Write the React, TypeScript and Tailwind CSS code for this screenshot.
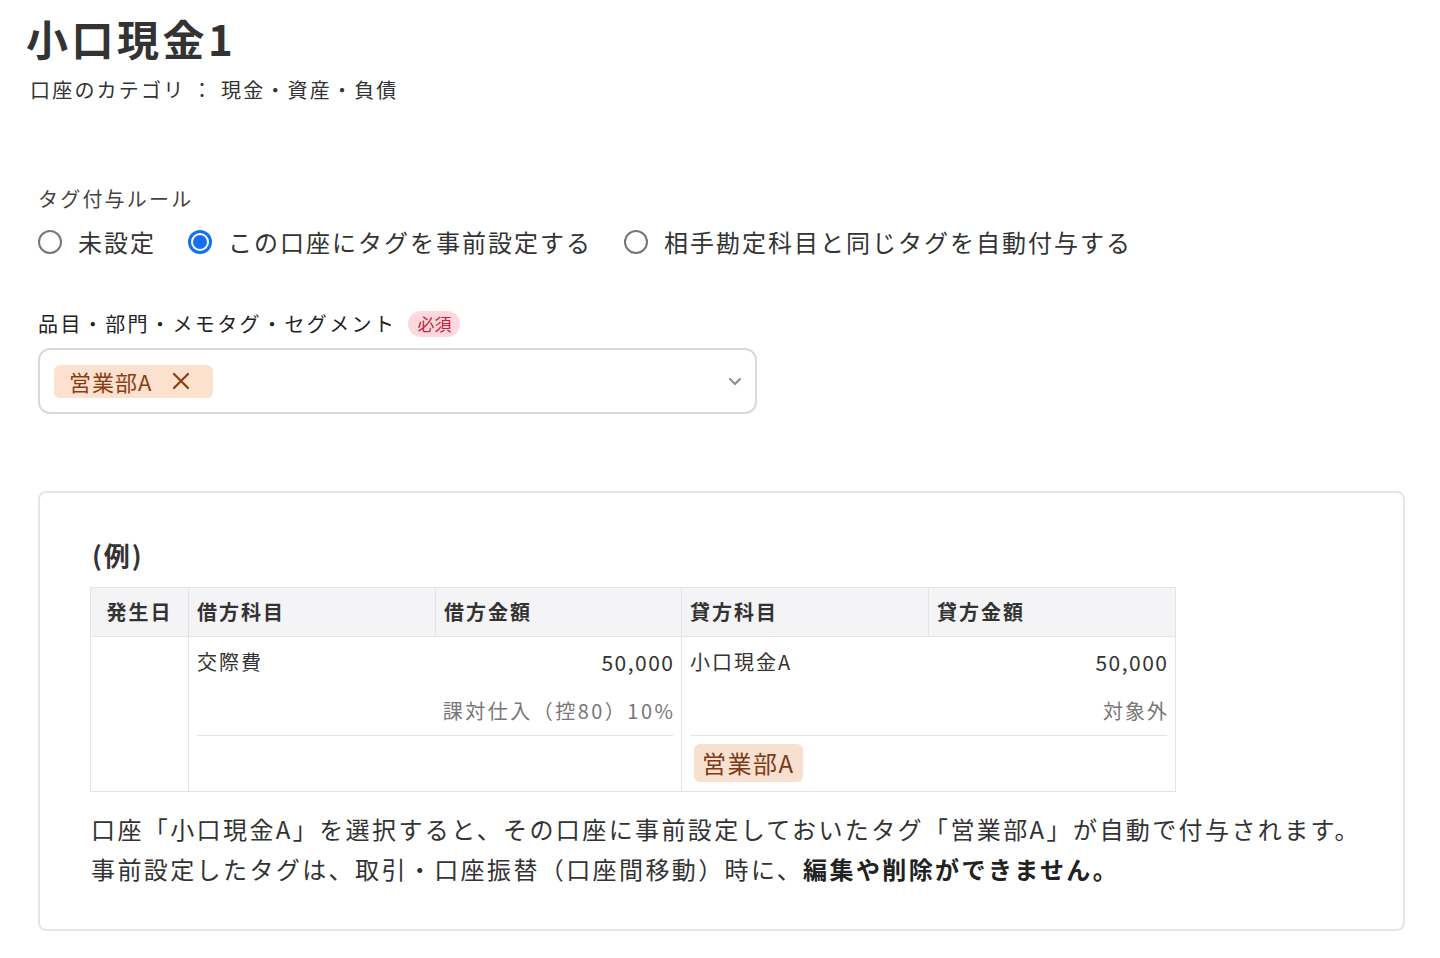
import { useState } from "react";

const font = { fontFamily: '"Noto Sans CJK JP", "Noto Sans", sans-serif' };

const Radio = ({ checked, label, onClick }: { checked: boolean; label: string; onClick: () => void }) => (
  <button type="button" onClick={onClick} className="flex items-center gap-[16px]">
    {checked ? (
      <span className="w-[24px] h-[24px] rounded-full bg-[#1470f0] flex items-center justify-center">
        <span className="w-[18px] h-[18px] rounded-full bg-white flex items-center justify-center">
          <span className="w-[14px] h-[14px] rounded-full bg-[#1470f0]" />
        </span>
      </span>
    ) : (
      <span className="w-[24px] h-[24px] rounded-full border-2 border-[#767676] bg-white" />
    )}
    <span className="text-[24px] leading-[36px] tracking-[2px] text-[#333]">{label}</span>
  </button>
);

const TagChip = () => (
  <span className="inline-flex items-center h-[38px] px-[8px] rounded-[6px] bg-[#f8e0d1] text-[24px] text-[#7a3b17] tracking-[1.5px]">
    営業部A
  </span>
);

export default function App() {
  const [rule, setRule] = useState(1);

  return (
    <div style={font} className="w-full min-h-screen bg-white text-[#333] pl-[26px] pt-[13px]">
      <h1 className="text-[42px] leading-[50px] font-bold tracking-[3.5px] text-[#333]">小口現金1</h1>
      <p className="mt-[12px] ml-[4px] text-[20px] leading-[30px] tracking-[2.2px]">
        口座のカテゴリ ： 現金・資産・負債
      </p>

      <div className="ml-[12px] w-[1367px]">
        <p className="mt-[79px] text-[20px] leading-[30px] tracking-[2.2px] text-[#444]">タグ付与ルール</p>
        <div className="mt-[10px] flex items-center gap-[32px]">
          <Radio checked={rule === 0} label="未設定" onClick={() => setRule(0)} />
          <Radio checked={rule === 1} label="この口座にタグを事前設定する" onClick={() => setRule(1)} />
          <Radio checked={rule === 2} label="相手勘定科目と同じタグを自動付与する" onClick={() => setRule(2)} />
        </div>

        <div className="mt-[49px] flex items-center gap-[12px]">
          <span className="text-[20px] leading-[30px] tracking-[2.4px] text-[#222]">品目・部門・メモタグ・セグメント</span>
          <span className="h-[26px] px-[9px] rounded-full bg-[#fdd8de] text-[#c4213d] text-[17px] leading-[26px]">必須</span>
        </div>

        <div className="mt-[9px] w-[719px] h-[66px] border-2 border-[#d9d8dc] rounded-[12px] flex items-center justify-between pl-[14px] pr-[12px]">
          <span className="inline-flex items-center h-[33px] w-[159px] pl-[15px] gap-[20px] rounded-[6px] bg-[#fde1cf] text-[#8a3c12]">
            <span className="text-[22px] tracking-[1px]">営業部A</span>
            <svg width="18" height="18" viewBox="0 0 18 18" fill="none" stroke="#8a3c12" strokeWidth="2.2" strokeLinecap="round">
              <path d="M2 2L16 16M16 2L2 16" />
            </svg>
          </span>
          <svg width="16" height="16" viewBox="0 0 16 16" fill="none" stroke="#8c8c8c" strokeWidth="2" strokeLinecap="round" strokeLinejoin="round">
            <path d="M3 6l5 5 5-5" />
          </svg>
        </div>

        <div className="mt-[77px] w-[1367px] border-2 border-[#e6e6e6] rounded-[8px] pt-[46px] pb-[40px] pl-[50px]">
          <p className="ml-[2px] text-[26px] leading-[32px] font-bold tracking-[2px] text-[#333]">(例)</p>

          <div className="mt-[16px] w-[1086px] border border-[#e4e4e4] grid grid-cols-[98px_247px_246px_247px_246px] text-[20px] tracking-[2px]">
            <div className="h-[49px] bg-[#f4f3f5] border-r border-b border-[#e4e4e4] flex items-center justify-center font-bold">
              発生日
            </div>
            <div className="h-[49px] bg-[#f4f3f5] border-r border-b border-[#e4e4e4] flex items-center px-[8px] font-bold">
              借方科目
            </div>
            <div className="h-[49px] bg-[#f4f3f5] border-r border-b border-[#e4e4e4] flex items-center px-[8px] font-bold">
              借方金額
            </div>
            <div className="h-[49px] bg-[#f4f3f5] border-r border-b border-[#e4e4e4] flex items-center px-[8px] font-bold">
              貸方科目
            </div>
            <div className="h-[49px] bg-[#f4f3f5] border-b border-[#e4e4e4] flex items-center px-[8px] font-bold">
              貸方金額
            </div>

            <div className="border-r border-[#e4e4e4]" />
            <div className="col-span-2 border-r border-[#e4e4e4] px-[8px]">
              <div className="border-b border-[#e4e4e4] pb-[9px]">
                <div className="pt-[10px] flex justify-between leading-[30px]">
                  <span>交際費</span>
                  <span className="text-[21px] tracking-[1.5px] -mr-[1.5px]">50,000</span>
                </div>
                <div className="mt-[19px] text-right leading-[30px] tracking-[2.5px] -mr-[2.5px] text-[#777]">
                  課対仕入（控80）10%
                </div>
              </div>
              <div className="h-[55px]" />
            </div>
            <div className="col-span-2 px-[8px]">
              <div className="border-b border-[#e4e4e4] pb-[9px]">
                <div className="pt-[10px] flex justify-between leading-[30px]">
                  <span>小口現金A</span>
                  <span className="text-[21px] tracking-[1.5px] -mr-[1.5px]">50,000</span>
                </div>
                <div className="mt-[19px] text-right leading-[30px] tracking-[2px] -mr-[2px] text-[#777]">
                  対象外
                </div>
              </div>
              <div className="pt-[8px] pb-[8px] pl-[4px]">
                <TagChip />
              </div>
            </div>
          </div>

          <div className="mt-[17px] ml-[1px] text-[24px] leading-[40px] tracking-[2.4px] text-[#333]">
            <p>口座「小口現金A」を選択すると、その口座に事前設定しておいたタグ「営業部A」が自動で付与されます。</p>
            <p>
              事前設定したタグは、取引・口座振替（口座間移動）時に、
              <span className="font-bold text-[#222]">編集や削除ができません。</span>
            </p>
          </div>
        </div>
      </div>
    </div>
  );
}
